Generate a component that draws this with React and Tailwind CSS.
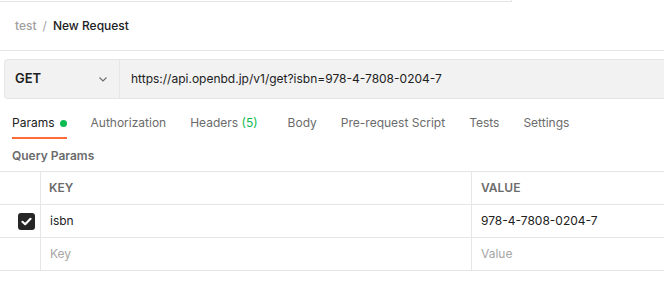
import { useState } from 'react';

const tabs = [
  { label: 'Params', active: true, dot: true },
  { label: 'Authorization' },
  { label: 'Headers', count: '(5)' },
  { label: 'Body' },
  { label: 'Pre-request Script' },
  { label: 'Tests' },
  { label: 'Settings' },
];

function Chevron() {
  return (
    <svg width="10" height="10" viewBox="0 0 10 10" fill="none" stroke="#6b6b6b" strokeWidth="1.1">
      <path d="M1.5 3.5 L5 7 L8.5 3.5" />
    </svg>
  );
}

function Check() {
  return (
    <div className="w-[17px] h-[17px] rounded-[3px] bg-[#262626] flex items-center justify-center">
      <svg width="11" height="9" viewBox="0 0 11 9" fill="none" stroke="white" strokeWidth="2.2" strokeLinecap="round" strokeLinejoin="round">
        <path d="M1.5 4.8 L4.2 7.2 L9.5 1.8" />
      </svg>
    </div>
  );
}

export default function App() {
  const [url] = useState('https://api.openbd.jp/v1/get?isbn=978-4-7808-0204-7');

  return (
    <div className="w-[664px] h-[302px] bg-white overflow-hidden text-[12px] text-[#212121]" style={{ fontFamily: 'Inter, "Noto Sans", sans-serif' }}>
      {/* top tab strip edge */}
      <div className="w-[512px] h-[2px] border-b border-r border-[#e6e6e6]" />

      {/* breadcrumb */}
      <div className="h-[49px] flex items-center px-[15px] gap-[6px] border-b border-[#e6e6e6]">
        <span className="text-[#a0a0a0] font-medium">test</span>
        <span className="text-[#a0a0a0]">/</span>
        <span className="font-medium text-[#212121]">New Request</span>
      </div>

      {/* url bar */}
      <div className="pt-[8px] pl-[4px]">
        <div className="h-[40px] flex bg-[#f2f2f2] border border-r-0 border-[#e6e6e6] rounded-l-[4px]">
          <div className="w-[115px] flex items-center justify-between pl-[10px] pr-[11px] border-r border-[#e6e6e6]">
            <span className="font-semibold text-[13px] text-[#212121]">GET</span>
            <Chevron />
          </div>
          <div className="flex items-center pl-[11px] text-[#212121]">{url}</div>
        </div>
      </div>

      {/* tabs */}
      <div className="h-[40px] flex items-end px-[12px] gap-[24px]">
        {tabs.map((t) => (
          <div
            key={t.label}
            className={
              'h-[24px] flex items-start gap-[5px] ' +
              (t.count ? 'mr-[6px] ' : '') +
              (t.active ? 'border-b-2 border-[#ff6c37] text-[#212121]' : 'text-[#6b6b6b]')
            }
          >
            <span className="leading-[16px]">
              {t.label}
              {t.count && <span className="text-[#0cbb52]"> {t.count}</span>}
            </span>
            {t.dot && <span className="mt-[5px] w-[7px] h-[7px] rounded-full bg-[#0cbb52]" />}
          </div>
        ))}
      </div>

      {/* query params label */}
      <div className="h-[32px] flex items-center pt-[2px] px-[12px] font-semibold text-[#6b6b6b]">Query Params</div>

      {/* table */}
      <div className="border-t border-[#e6e6e6]">
        <div className="flex h-[33px] border-b border-[#e6e6e6]">
          <div className="w-[41px] border-r border-[#e6e6e6]" />
          <div className="w-[431px] flex items-center pl-[8px] border-r border-[#e6e6e6] font-semibold text-[#6b6b6b]">KEY</div>
          <div className="flex-1 flex items-center pl-[9px] font-semibold text-[#6b6b6b]">VALUE</div>
        </div>
        <div className="flex h-[33px] border-b border-[#e6e6e6]">
          <div className="w-[41px] border-r border-[#e6e6e6] flex items-center justify-end pr-[5px]">
            <Check />
          </div>
          <div className="w-[431px] flex items-center pl-[9px] border-r border-[#e6e6e6]">isbn</div>
          <div className="flex-1 flex items-center pl-[9px]">978-4-7808-0204-7</div>
        </div>
        <div className="flex h-[33px] border-b border-[#e6e6e6]">
          <div className="w-[41px] border-r border-[#e6e6e6]" />
          <div className="w-[431px] flex items-center pl-[9px] border-r border-[#e6e6e6] text-[#a6a6a6]">Key</div>
          <div className="flex-1 flex items-center pl-[9px] text-[#a6a6a6]">Value</div>
        </div>
      </div>
    </div>
  );
}
